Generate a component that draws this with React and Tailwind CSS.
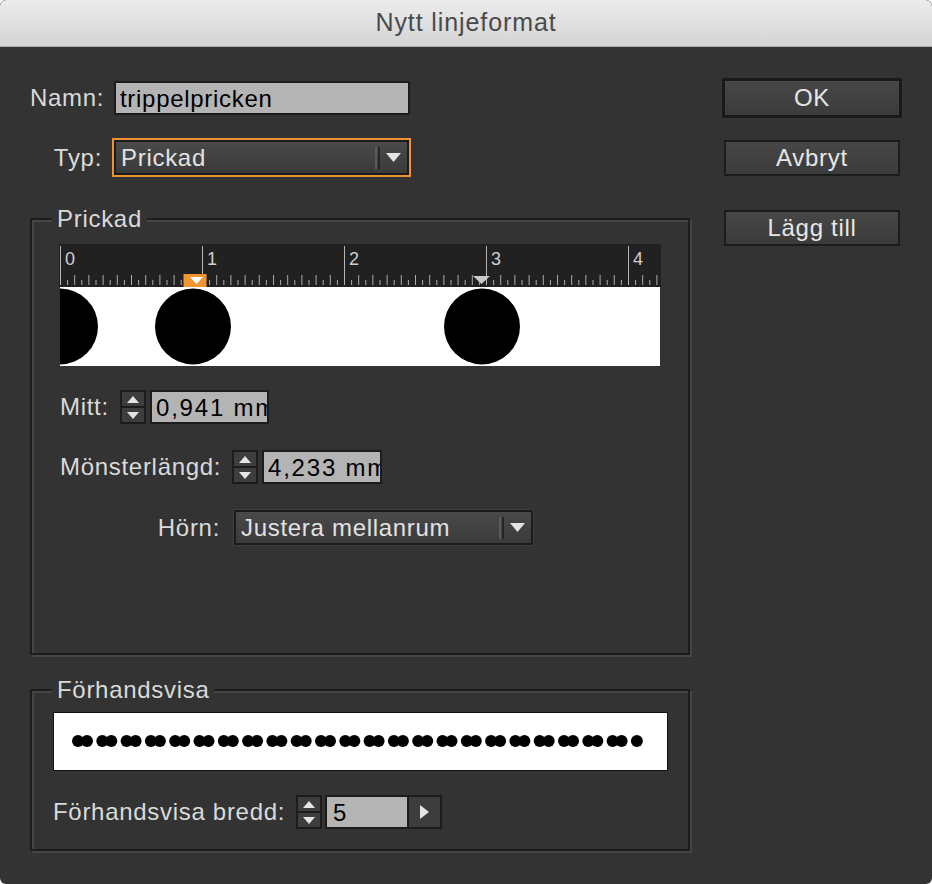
import React from 'react';

const FONT = "font-['Liberation_Sans',Arial,sans-serif]";

function TriUp() {
  return (
    <svg width="12" height="7" viewBox="0 0 12 7">
      <path d="M6 0 L12 7 L0 7 Z" fill="#e4e4e4" />
    </svg>
  );
}

function TriDown({ w = 12, h = 7 }) {
  return (
    <svg width={w} height={h} viewBox={`0 0 ${w} ${h}`}>
      <path d={`M0 0 L${w} 0 L${w / 2} ${h} Z`} fill="#e4e4e4" />
    </svg>
  );
}

function Spinner() {
  return (
    <div className="flex flex-col w-[26px] h-[34px] border-2 border-[#1c1c1c] bg-[#1c1c1c] gap-[2px] shrink-0">
      <div className="flex-1 bg-[#3d3d3d] flex items-center justify-center">
        <TriUp />
      </div>
      <div className="flex-1 bg-[#3d3d3d] flex items-center justify-center">
        <TriDown />
      </div>
    </div>
  );
}

function NumberField({ value, width }) {
  return (
    <div
      className={`${width} h-[34px] border-2 border-[#1c1c1c] bg-[#b4b4b4] overflow-hidden whitespace-nowrap pl-[4px] text-black leading-[31px] tracking-[1.8px] shrink-0`}
    >
      {value}
    </div>
  );
}

function SelectInner({ value }) {
  return (
    <div className="flex items-center h-full border-2 border-[#1b1b1b] bg-linear-to-b from-[#4a4a4a] to-[#3a3a3a]">
      <span className="flex-1 pl-[5px] leading-[31px] text-[#e2e2e2] whitespace-nowrap">{value}</span>
      <span className="w-[2px] h-[22px] bg-[#5a5a5a]" />
      <span className="w-[2px] h-[22px] bg-[#262626] ml-[1px]" />
      <span className="w-[27px] flex justify-center">
        <TriDown w={15} h={9} />
      </span>
    </div>
  );
}

function GroupBox({ title, className, children }) {
  return (
    <div
      className={`relative w-[660px] border-2 border-[#1c1c1c] shadow-[2px_2px_0_#454545,inset_2px_2px_0_#454545] ${className}`}
    >
      <span className="absolute left-[20px] top-[-15px] px-[5px] bg-[#333333] leading-[28px] text-[#dadada]">
        {title}
      </span>
      {children}
    </div>
  );
}

function Ruler() {
  const ticks = [];
  for (let i = 1; i < 85; i++) {
    if (i % 20 === 0) continue;
    const x = 1.5 + i * 7.1;
    if (x > 601) break;
    const h = i % 2 === 0 ? 10 : 5;
    ticks.push(<line key={i} x1={x} x2={x} y1={41 - h} y2={41} stroke="#ababab" strokeWidth="1" />);
  }
  const majors = [0, 1, 2, 3, 4];
  return (
    <svg width="602" height="43" viewBox="0 0 602 43" className="block bg-[#212121]">
      {majors.map((m) => (
        <g key={m}>
          <line x1={1.5 + m * 142} x2={1.5 + m * 142} y1="2" y2="41" stroke="#b5b5b5" strokeWidth="1" />
          <text
            x={6 + m * 142}
            y="21"
            fontSize="18"
            fill="#cfcfcf"
            fontFamily="Liberation Sans, Arial, sans-serif"
          >
            {m}
          </text>
        </g>
      ))}
      {ticks}
      <rect x="124.5" y="30" width="23" height="13" fill="#f0952f" />
      <path d="M131 33 L144 33 L137.5 40 Z" fill="#ffffff" />
      <path d="M414 32 L431 32 L422.5 40 Z" fill="#c9c9c9" />
    </svg>
  );
}

function Strip() {
  return (
    <svg width="600" height="79" viewBox="0 0 600 79" className="block ml-[1px] bg-white">
      <circle cx="0" cy="39.5" r="38" fill="#000" />
      <circle cx="133" cy="39.5" r="38" fill="#000" />
      <circle cx="422" cy="39.5" r="38" fill="#000" />
    </svg>
  );
}

function PreviewLine() {
  const dots = [];
  let x = 24;
  let i = 0;
  while (x < 590) {
    dots.push(<circle key={i} cx={x} cy="28" r="6" fill="#000" />);
    x += i % 2 === 0 ? 9 : 15.3;
    i++;
  }
  return (
    <div className="w-[615px] h-[59px] border border-[#111] bg-white">
      <svg width="613" height="57" viewBox="0 0 613 57" className="block">
        {dots}
      </svg>
    </div>
  );
}

function DialogButton({ children, primary, className }) {
  return (
    <div
      className={`flex items-center justify-center bg-linear-to-b from-[#474747] to-[#3b3b3b] text-[#e6e6e6] ${
        primary ? 'border-[3px] border-[#1a1a1a]' : 'border-2 border-[#1c1c1c]'
      } ${className}`}
    >
      {children}
    </div>
  );
}

export default function App() {
  return (
    <div className={`w-[932px] h-[884px] bg-white ${FONT} text-[24px] tracking-[0.7px]`}>
      <div className="w-full h-full rounded-[6px] overflow-hidden bg-[#333333] flex flex-col">
        <div className="h-[47px] shrink-0 flex items-center justify-center bg-linear-to-b from-[#ececec] to-[#d4d4d4] border-b border-[#acacac] rounded-t-[6px]">
          <span className="text-[25px] tracking-[0.9px] text-[#4a4a4a]">Nytt linjeformat</span>
        </div>

        <div className="flex flex-1">
          {/* left column */}
          <div className="w-[692px] pl-[30px] flex flex-col">
            <div className="flex items-center mt-[34px] h-[34px]">
              <span className="w-[72px] text-right text-[#dadada]">Namn:</span>
              <div className="ml-[12px] w-[296px] h-[34px] border-2 border-[#1c1c1c] bg-[#b4b4b4] pl-[4px] leading-[31px] text-black">
                trippelpricken
              </div>
            </div>

            <div className="flex items-center mt-[23px] h-[39px]">
              <span className="w-[72px] text-right text-[#dadada]">Typ:</span>
              <div className="ml-[10px] w-[299px] h-[39px] border-2 border-[#f0922f]">
                <SelectInner value="Prickad" />
              </div>
            </div>

            <GroupBox title="Prickad" className="mt-[41px] h-[437px] pl-[27px] pt-[24px]">
              <Ruler />
              <Strip />

              <div className="flex items-center mt-[24px] ml-[1px] h-[34px]">
                <span className="w-[60px] text-[#dadada]">Mitt:</span>
                <Spinner />
                <div className="ml-[4px]">
                  <NumberField value="0,941 mm" width="w-[119px]" />
                </div>
              </div>

              <div className="flex items-center mt-[26px] ml-[1px] h-[34px]">
                <span className="w-[172px] text-[#dadada]">Mönsterlängd:</span>
                <Spinner />
                <div className="ml-[4px]">
                  <NumberField value="4,233 mm" width="w-[120px]" />
                </div>
              </div>

              <div className="flex items-center mt-[26px] ml-[1px] h-[35px]">
                <span className="w-[160px] text-right text-[#dadada]">Hörn:</span>
                <div className="ml-[14px] w-[299px] h-[35px] shadow-[0_0_0_1px_#3e3e3e]">
                  <SelectInner value="Justera mellanrum" />
                </div>
              </div>
            </GroupBox>

            <GroupBox title="Förhandsvisa" className="mt-[34px] h-[162px] pl-[21px] pt-[21px]">
              <PreviewLine />
              <div className="flex items-center mt-[24px] h-[34px]">
                <span className="w-[243px] text-[#dadada] whitespace-nowrap">Förhandsvisa bredd:</span>
                <Spinner />
                <div className="ml-[3px] flex">
                  <div className="w-[84px] h-[34px] border-2 border-[#1c1c1c] bg-[#b4b4b4] pl-[6px] leading-[31px] text-black">
                    5
                  </div>
                  <div className="w-[33px] h-[34px] border-2 border-l-0 border-[#1c1c1c] bg-[#3d3d3d] flex items-center justify-center">
                    <svg width="9" height="14" viewBox="0 0 9 14">
                      <path d="M0 0 L9 7 L0 14 Z" fill="#e4e4e4" />
                    </svg>
                  </div>
                </div>
              </div>
            </GroupBox>
          </div>

          {/* right column */}
          <div className="ml-[30px] pt-[31px] flex flex-col">
            <DialogButton primary className="w-[180px] h-[40px]">OK</DialogButton>
            <DialogButton className="ml-[2px] mt-[22px] w-[176px] h-[36px]">Avbryt</DialogButton>
            <DialogButton className="ml-[2px] mt-[34px] w-[176px] h-[36px]">Lägg till</DialogButton>
          </div>
        </div>
      </div>
    </div>
  );
}
